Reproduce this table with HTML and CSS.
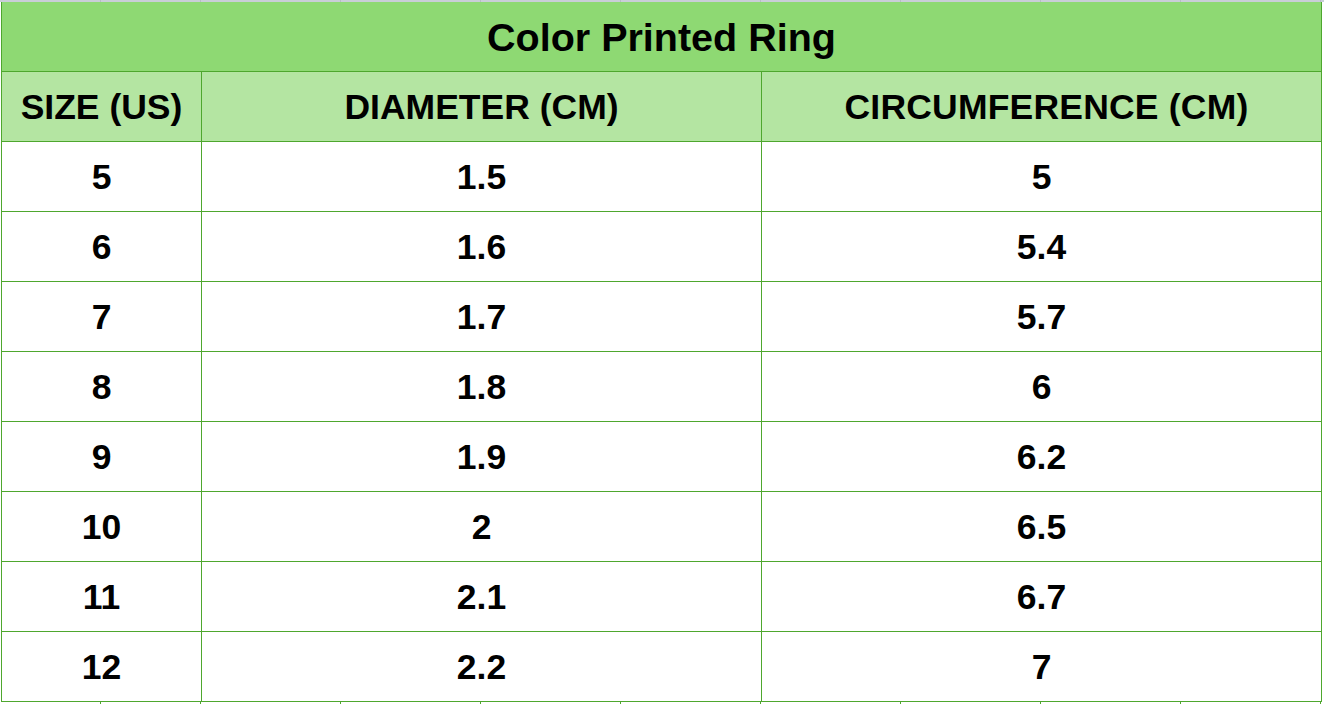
FILE: index.html
```html
<!DOCTYPE html>
<html>
<head>
<meta charset="utf-8">
<link rel="stylesheet" href="styles.css">
</head>
<body>
<div class="sheet">
  <div class="gridstrip top">
    <span class="c1"></span><span class="c2"></span><span></span><span></span><span></span><span></span><span></span><span></span><span></span><span></span>
  </div>
  <div class="table">
    <div class="cell title">Color Printed Ring</div>
    <div class="cell head">SIZE (US)</div>
    <div class="cell head">DIAMETER (CM)</div>
    <div class="cell head circ">CIRCUMFERENCE (CM)</div>
    <div class="cell">5</div><div class="cell">1.5</div><div class="cell">5</div>
    <div class="cell">6</div><div class="cell">1.6</div><div class="cell">5.4</div>
    <div class="cell">7</div><div class="cell">1.7</div><div class="cell">5.7</div>
    <div class="cell">8</div><div class="cell">1.8</div><div class="cell">6</div>
    <div class="cell">9</div><div class="cell">1.9</div><div class="cell">6.2</div>
    <div class="cell">10</div><div class="cell">2</div><div class="cell">6.5</div>
    <div class="cell">11</div><div class="cell">2.1</div><div class="cell">6.7</div>
    <div class="cell">12</div><div class="cell">2.2</div><div class="cell">7</div>
  </div>
  <div class="gridstrip bottom">
    <span class="c1"></span><span class="c2"></span><span></span><span></span><span></span><span></span><span></span><span></span><span></span><span></span>
  </div>
</div>
</body>
</html>
```

FILE: styles.css
```css
html, body {
  margin: 0;
  padding: 0;
  background: #ffffff;
}

.sheet {
  width: 1324px;
  height: 704px;
  overflow: hidden;
  font-family: "Liberation Sans", Arial, sans-serif;
  font-weight: bold;
  color: #000;
}

.gridstrip {
  display: flex;
  height: 2px;
}

.gridstrip span {
  flex: 0 0 140px;
  box-sizing: border-box;
  border-right: 1px solid #b8bcc6;
}

.gridstrip span.c1 { flex-basis: 101px; }
.gridstrip span.c2 { flex-basis: 100px; }

.gridstrip.top {
  background: #c9ced8;
}

.gridstrip.bottom span {
  border-right-color: #4ea72e;
}

.table {
  margin-left: 1px;
  width: 1321px;
  box-sizing: border-box;
  border-left: 1px solid #4ea72e;
  display: grid;
  grid-template-columns: 200px 560px 560px;
  grid-auto-rows: 70px;
}

.cell {
  box-sizing: border-box;
  border-right: 1px solid #4ea72e;
  border-bottom: 1px solid #4ea72e;
  display: flex;
  align-items: center;
  justify-content: center;
  font-size: 35.5px;
  padding-top: 2px;
  background: #ffffff;
}

.cell.title {
  grid-column: 1 / -1;
  background: #8ed973;
  font-size: 39.5px;
  padding-top: 1px;
}

.cell.head {
  background: #b4e5a2;
}

.cell.head.circ {
  padding-left: 10px;
  letter-spacing: 0.2px;
}
```
